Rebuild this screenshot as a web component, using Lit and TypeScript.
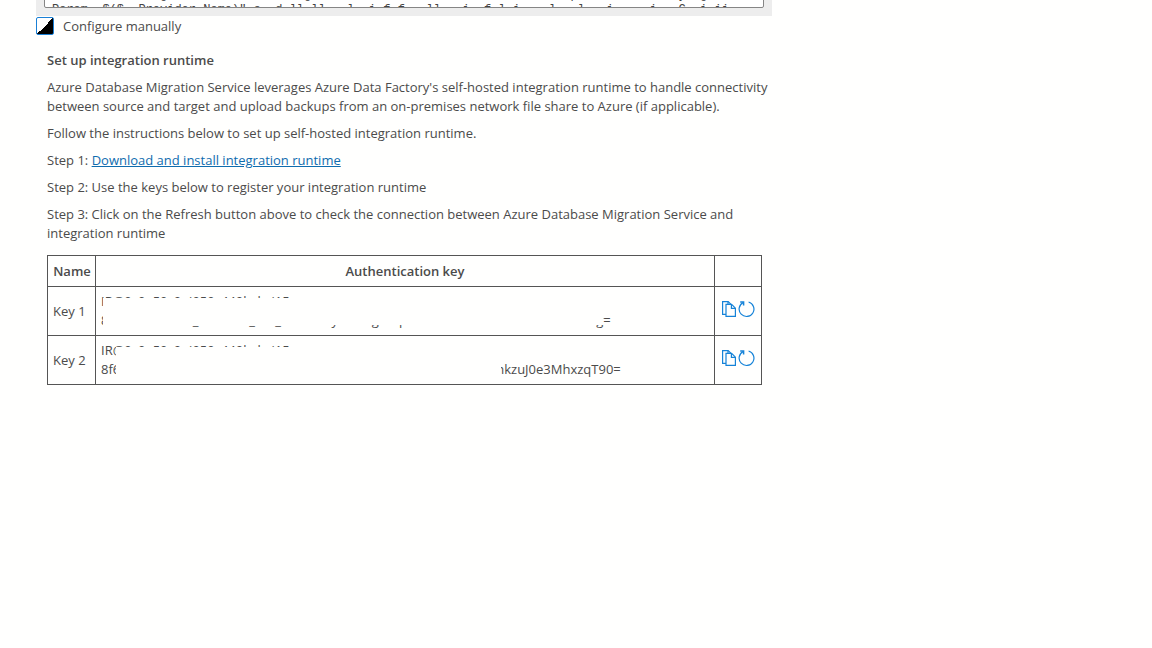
import { LitElement, html, css } from "lit";
import { customElement, state } from "lit/decorators.js";

const SCRIPT_TEXT = [
  "               g                   g                                    p              y  g",
  "Param  $($_ Provider.Name)\" a  d ll ll   l  i f f   ll   i  f l i    l   l   i     i   C  i ii      l",
].join("\n");

@customElement("key-actions")
export class KeyActions extends LitElement {
  static properties = { name: {} };
  declare name: string;

  static styles = css`
    :host {
      display: flex;
      justify-content: center;
      gap: 1px;
    }
    button {
      display: block;
      padding: 0;
      border: 0;
      background: none;
      cursor: pointer;
    }
    svg {
      display: block;
      fill: none;
      stroke: #1683d8;
    }
  `;

  render() {
    return html`
      <button type="button" aria-label="Copy ${this.name}">
        <svg width="16" height="18" viewBox="0 0 16 18" stroke-width="1.2">
          <path d="M5 14.4H1.6V1.6H7.2L9.8 4.2" />
          <path d="M5 4.4H10.6L14.4 8.2V16.4H5Z" />
          <path d="M10.4 4.6V8.4H14.2M7 1.8V4.2" />
        </svg>
      </button>
      <button type="button" aria-label="Regenerate ${this.name}">
        <svg width="17" height="18" viewBox="0 0 17 18" stroke-width="1.2">
          <path d="M10.6 2A7.4 7.4 0 1 1 5 2.6" />
          <path d="M2.2 2H5.6V5.4" stroke-width="1.5" />
        </svg>
      </button>
    `;
  }
}

@customElement("app-root")
export class AppRoot extends LitElement {
  @state() private manual = true;

  static styles = css`
    :host {
      display: block;
      min-height: 100vh;
      background: #fffffe;
      color: #4b4b4b;
      font: 13px/19px "Open Sans", "Noto Sans", sans-serif;
    }
    .panel {
      max-width: 736px;
      margin-left: 36px;
    }
    .script {
      display: flex;
      align-items: flex-end;
      height: 8px;
      padding: 0 8px 8px;
      overflow: hidden;
      background: #ededed;
    }
    textarea {
      flex: 1;
      box-sizing: border-box;
      height: 30px;
      padding: 9px 7px 0;
      border: 1px solid #858585;
      border-radius: 2px;
      background: #fff;
      color: #444;
      font: 12px/15px "Liberation Mono", monospace;
      white-space: pre;
      overflow: hidden;
      resize: none;
    }
    .toggle {
      display: flex;
      align-items: center;
      gap: 9px;
      height: 20px;
      font-weight: 500;
    }
    .toggle input {
      appearance: none;
      box-sizing: border-box;
      width: 18px;
      height: 18px;
      margin: 0;
      border: 1px solid #1a80d6;
      border-radius: 2px;
      background: #fff;
    }
    .toggle input:checked {
      background: linear-gradient(135deg, #fff 50%, #000 50%);
    }
    .content {
      display: flex;
      flex-direction: column;
      gap: 8px;
      padding: 15px 10px 0 11px;
    }
    h2,
    p {
      margin: 0;
      font-size: 13px;
    }
    p {
      margin-right: -16px;
    }
    h2,
    th {
      font-weight: 600;
    }
    a {
      color: #0f6cae;
    }
    table {
      width: 100%;
      margin-top: 4px;
      border-collapse: collapse;
    }
    th,
    td {
      height: 49px;
      padding: 0 5px;
      border: 1px solid #555;
      box-sizing: border-box;
    }
    th {
      height: 31px;
    }
    .name {
      width: 48px;
      padding-right: 4px;
      white-space: nowrap;
    }
    .actions {
      width: 47px;
      padding: 0 0 5px;
    }
    .key {
      position: relative;
    }
    .line {
      display: flex;
      white-space: pre;
    }
    .gap {
      width: 376px;
    }
    .cover {
      position: absolute;
      background: #fffffe;
    }
    .cover-one {
      inset: 11px 111px 10px 7px;
    }
    .cover-two {
      inset: 11px 213px 4px 20px;
    }
  `;

  render() {
    return html`
      <main class="panel">
        <div class="script">
          <textarea readonly aria-label="Script" .value=${SCRIPT_TEXT}></textarea>
        </div>
        <label class="toggle">
          <input
            type="checkbox"
            .checked=${this.manual}
            @change=${(e: Event) => (this.manual = (e.target as HTMLInputElement).checked)}
          />
          Configure manually
        </label>
        <section class="content">
          <h2>Set up integration runtime</h2>
          <p>
            Azure Database Migration Service leverages Azure Data Factory's self-hosted integration
            runtime to handle connectivity between source and target and upload backups from an
            on-premises network file share to Azure (if applicable).
          </p>
          <p>Follow the instructions below to set up self-hosted integration runtime.</p>
          <p>Step 1: <a href="#">Download and install integration runtime</a></p>
          <p>Step 2: Use the keys below to register your integration runtime</p>
          <p>
            Step 3: Click on the Refresh button above to check the connection between Azure Database
            Migration Service and integration runtime
          </p>
          <table>
            <thead>
              <tr>
                <th class="name">Name</th>
                <th>Authentication key</th>
                <th class="actions"></th>
              </tr>
            </thead>
            <tbody>
              <tr>
                <td class="name">Key 1</td>
                <td class="key">
                  <div class="line">IR@0c0a50c0nj050s440bcbci15</div>
                  <div class="line">8                         _               _      _               y          g      p                                                        g=</div>
                  <span class="cover cover-one"></span>
                </td>
                <td class="actions"><key-actions name="Key 1"></key-actions></td>
              </tr>
              <tr>
                <td class="name">Key 2</td>
                <td class="key">
                  <div class="line">IR@0c0a50c0nj050s440bcbci15</div>
                  <div class="line">8f6<span class="gap"></span>hkzuJ0e3MhxzqT90=</div>
                  <span class="cover cover-two"></span>
                </td>
                <td class="actions"><key-actions name="Key 2"></key-actions></td>
              </tr>
            </tbody>
          </table>
        </section>
      </main>
    `;
  }
}
